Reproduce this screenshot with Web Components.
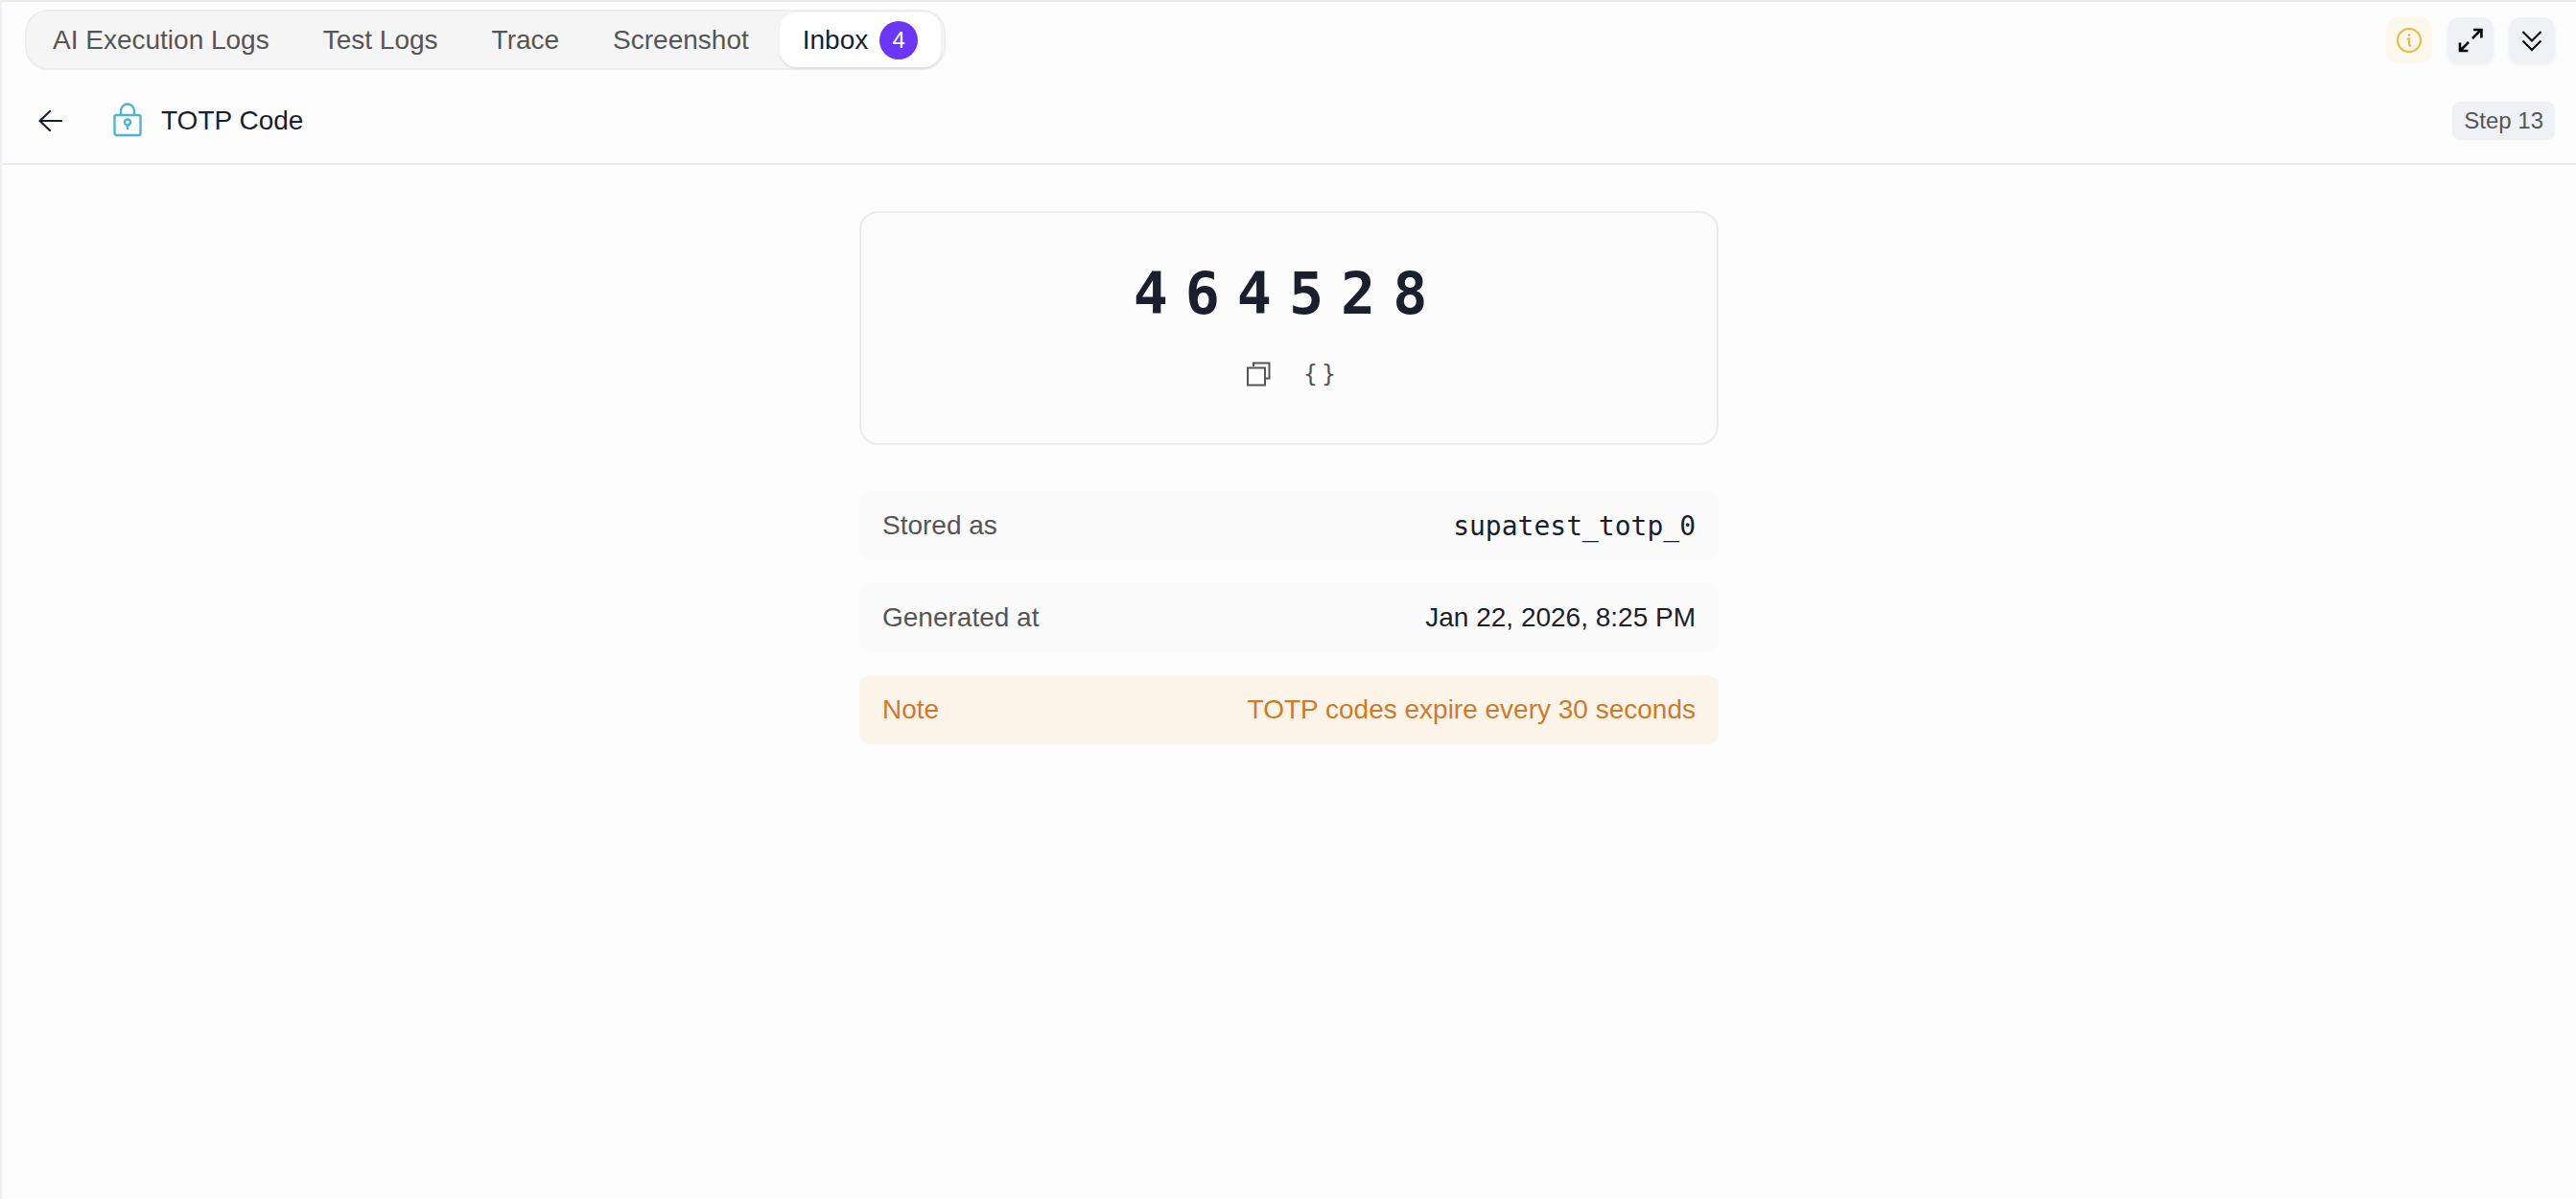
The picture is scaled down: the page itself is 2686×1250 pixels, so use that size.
<!DOCTYPE html>
<html>
<head>
<meta charset="utf-8">
<title>TOTP Code</title>
<style>
  html, body {
    margin: 0;
    height: 100%;
    background: #fdfdfd;
  }
  body {
    font-family: "Liberation Sans", Arial, sans-serif;
    box-sizing: border-box;
    height: 1250px;
    overflow: hidden;
    border-top: 2px solid #e9e9ef;
    border-left: 2px solid #f0f0f4;
  }
</style>
</head>
<body>
  <top-bar>
    <tab-list>
      <tab-item>AI Execution Logs</tab-item>
      <tab-item>Test Logs</tab-item>
      <tab-item>Trace</tab-item>
      <tab-item>Screenshot</tab-item>
      <tab-item active count="4">Inbox</tab-item>
    </tab-list>
    <icon-button slot="actions" tone="warn">
      <svg width="30" height="30" viewBox="0 0 30 30" fill="none" stroke="#e8b93e" stroke-width="2" stroke-linecap="round">
        <circle cx="15" cy="15" r="12"/>
        <circle cx="15" cy="9.6" r=".6" fill="#e8b93e" stroke-width="1.4"/>
        <path d="M13.6 13.4h1.5v6.2c0 .9.5 1.2 1.3 1"/>
      </svg>
    </icon-button>
    <icon-button slot="actions">
      <svg width="28" height="28" viewBox="0 0 28 28" fill="none" stroke="#000" stroke-width="2.6">
        <path d="M16 12l9-9M17 3h8.4v8.4M12 16l-9 9M3 16.6V25h8.4"/>
      </svg>
    </icon-button>
    <icon-button slot="actions">
      <svg width="24" height="24" viewBox="0 0 24 24" fill="none" stroke="#000" stroke-width="2">
        <path d="M2.5 3l9.5 9.5L21.5 3M2.5 12.5l9.5 9.5 9.5-9.5"/>
      </svg>
    </icon-button>
  </top-bar>

  <step-header step="Step 13">
    <svg slot="icon" width="32" height="36" viewBox="0 0 32 36" fill="none" stroke="#4fb3d9" stroke-width="2.4" style="overflow: visible">
      <path d="M9 12V7.5a7 7 0 0 1 14 0V12"/>
      <rect x="2.5" y="12" width="27" height="21" rx="2"/>
      <circle cx="16" cy="19.5" r="3"/>
      <path d="M16 22.5v4.500"/>
    </svg>
    TOTP Code
  </step-header>

  <main-panel>
    <otp-card code="464528"></otp-card>
    <info-row label="Stored as" mono>supatest_totp_0</info-row>
    <info-row label="Generated at">Jan 22, 2026, 8:25 PM</info-row>
    <info-row label="Note" tone="note">TOTP codes expire every 30 seconds</info-row>
  </main-panel>

<script>
class TopBar extends HTMLElement {
  constructor() {
    super();
    this.attachShadow({mode: 'open'});
    this.shadowRoot.innerHTML = `
      <style>
        :host {
          display: flex;
          align-items: center;
          justify-content: space-between;
          padding: 8px 22px 0 24px;
        }
        .actions {
          display: flex;
          gap: 16px;
        }
      </style>
      <slot></slot>
      <div class="actions"><slot name="actions"></slot></div>`;
  }
}

class TabList extends HTMLElement {
  constructor() {
    super();
    this.attachShadow({mode: 'open'});
    this.shadowRoot.innerHTML = `
      <style>
        :host {
          display: flex;
          gap: 8px;
          padding: 1px 3px;
          background: #f5f5f5;
          border: 2px solid #eeeeee;
          border-radius: 24px;
        }
      </style>
      <slot></slot>`;
  }
}

class TabItem extends HTMLElement {
  constructor() {
    super();
    this.attachShadow({mode: 'open'});
    const count = this.getAttribute('count');
    this.shadowRoot.innerHTML = `
      <style>
        :host {
          display: flex;
          align-items: center;
          gap: 12px;
          height: 57px;
          padding: 0 24px;
          border-radius: 18px;
          font-size: 28px;
          color: #555555;
          white-space: nowrap;
        }
        :host([active]) {
          background: #ffffff;
          color: #1a1f2e;
          box-shadow: 0 2px 2px rgba(0, 0, 0, .07);
        }
        .badge {
          display: flex;
          align-items: center;
          justify-content: center;
          width: 40px;
          height: 40px;
          border-radius: 50%;
          background: #6b36f5;
          color: #ffffff;
          font-size: 24px;
        }
      </style>
      <slot></slot>
      ${count ? `<span class="badge">${count}</span>` : ''}`;
  }
}

class IconButton extends HTMLElement {
  constructor() {
    super();
    this.attachShadow({mode: 'open'});
    this.shadowRoot.innerHTML = `
      <style>
        :host {
          display: flex;
          align-items: center;
          justify-content: center;
          width: 48px;
          height: 48px;
          border-radius: 12px;
          background: #f0f1f5;
          box-shadow: 0 2px 4px rgba(0, 0, 0, .05);
        }
        :host([tone="warn"]) {
          background: #fdf8ec;
          box-shadow: none;
        }
      </style>
      <slot></slot>`;
  }
}

class StepHeader extends HTMLElement {
  constructor() {
    super();
    this.attachShadow({mode: 'open'});
    this.shadowRoot.innerHTML = `
      <style>
        :host {
          display: flex;
          align-items: center;
          box-sizing: border-box;
          height: 99px;
          padding: 9px 22px 0 38px;
          border-bottom: 2px solid #e9e9ef;
          font-size: 28px;
          color: #1a1f2e;
        }
        .back {
          display: block;
          margin-right: 52px;
        }
        .icon {
          display: flex;
          margin-right: 19px;
        }
        .step {
          margin-left: auto;
          padding: 0 12px;
          height: 40px;
          line-height: 40px;
          border-radius: 8px;
          background: #f0f1f5;
          color: #555555;
          font-size: 24px;
        }
      </style>
      <svg class="back" width="25" height="24" viewBox="0 0 25 24" fill="none" stroke="#1a1f2e" stroke-width="2.2" stroke-linecap="round" stroke-linejoin="round">
        <path d="M24 12H2M12 2L1.5 12 12 22"/>
      </svg>
      <span class="icon"><slot name="icon"></slot></span>
      <slot></slot>
      <span class="step">${this.getAttribute('step')}</span>`;
  }
}

class MainPanel extends HTMLElement {
  constructor() {
    super();
    this.attachShadow({mode: 'open'});
    this.shadowRoot.innerHTML = `
      <style>
        :host {
          display: flex;
          flex-direction: column;
          gap: 24px;
          box-sizing: border-box;
          width: 896px;
          margin: 48px auto 0;
        }
      </style>
      <slot></slot>`;
  }
}

class OtpCard extends HTMLElement {
  constructor() {
    super();
    this.attachShadow({mode: 'open'});
    this.shadowRoot.innerHTML = `
      <style>
        :host {
          display: flex;
          flex-direction: column;
          align-items: center;
          box-sizing: border-box;
          height: 244px;
          margin-bottom: 24px;
          padding-top: 48px;
          background: #fcfcfc;
          border: 2px solid #ebebf0;
          border-radius: 20px;
        }
        .code {
          font-family: "DejaVu Sans Mono", monospace;
          font-weight: 700;
          font-size: 60px;
          line-height: 72px;
          letter-spacing: 18px;
          color: #1a1f2e;
        }
        .tools {
          display: flex;
          align-items: center;
          gap: 33px;
          margin-top: 32px;
          color: #555555;
        }
        .braces {
          font-family: "DejaVu Sans Mono", monospace;
          font-size: 24px;
          line-height: 32px;
          letter-spacing: -5px;
        }
      </style>
      <div class="code">${this.getAttribute('code')}</div>
      <div class="tools">
        <svg width="26" height="26" viewBox="0 0 26 26" fill="none" stroke="#555555" stroke-width="2">
          <path d="M7 5V1.5h16.500V17.500H19.500"/>
          <rect x="1" y="6.5" width="18" height="18"/>
        </svg>
        <span class="braces">{ }</span>
      </div>`;
  }
}

class InfoRow extends HTMLElement {
  constructor() {
    super();
    this.attachShadow({mode: 'open'});
    this.shadowRoot.innerHTML = `
      <style>
        :host {
          display: flex;
          align-items: center;
          justify-content: space-between;
          box-sizing: border-box;
          height: 72px;
          padding: 0 24px;
          border-radius: 12px;
          background: #fbfbfb;
          font-size: 28px;
          color: #555555;
        }
        :host([tone="note"]) {
          background: #fcf4e9;
          color: #cf7a2b;
        }
        .value {
          color: #1a1f2e;
        }
        :host([tone="note"]) .value {
          color: #cf7a2b;
        }
        :host([mono]) .value {
          font-family: "DejaVu Sans Mono", monospace;
        }
      </style>
      <span>${this.getAttribute('label')}</span>
      <span class="value"><slot></slot></span>`;
  }
}

customElements.define('top-bar', TopBar);
customElements.define('tab-list', TabList);
customElements.define('tab-item', TabItem);
customElements.define('icon-button', IconButton);
customElements.define('step-header', StepHeader);
customElements.define('main-panel', MainPanel);
customElements.define('otp-card', OtpCard);
customElements.define('info-row', InfoRow);
</script>
</body>
</html>
